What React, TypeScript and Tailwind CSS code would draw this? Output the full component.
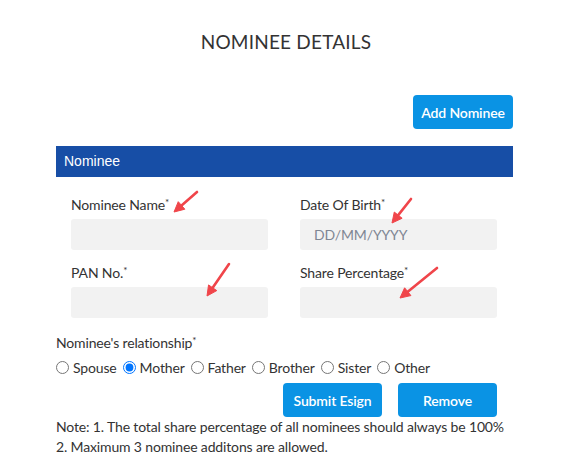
import React from "react";

const relations = ["Spouse", "Mother", "Father", "Brother", "Sister", "Other"];

function Star() {
  return <span className="relative -top-[4px] text-[10px] leading-none">*</span>;
}

function Field({ label, placeholder }: { label: string; placeholder?: string }) {
  return (
    <div className="flex flex-col">
      <label className="block h-5 text-[14px] leading-5 text-[#333]">
        {label}
        <Star />
      </label>
      <input
        className="mt-[4px] h-[31px] w-full rounded-[3px] bg-[#f2f2f2] px-[14px] text-[14px] text-[#333] outline-none placeholder:text-[#7f8694]"
        placeholder={placeholder}
      />
    </div>
  );
}

function Arrows() {
  const arrows = [
    [197, 192, 174, 212],
    [411, 199, 392, 223],
    [229, 264, 207, 296],
    [437, 268, 400, 298],
  ];
  return (
    <svg className="pointer-events-none absolute left-0 top-0" width="572" height="458">
      {arrows.map(([x1, y1, x2, y2], i) => {
        const a = Math.atan2(y2 - y1, x2 - x1);
        const l = 10;
        const w = 5;
        const bx = x2 - l * Math.cos(a);
        const by = y2 - l * Math.sin(a);
        const p1 = [bx + w * Math.sin(a), by - w * Math.cos(a)];
        const p2 = [bx - w * Math.sin(a), by + w * Math.cos(a)];
        return (
          <g key={i} fill="#f0454a" stroke="#f0454a">
            <line x1={x1} y1={y1} x2={bx} y2={by} strokeWidth="2.6" strokeLinecap="round" />
            <polygon points={`${p1[0]},${p1[1]} ${x2},${y2} ${p2[0]},${p2[1]}`} strokeWidth="1" strokeLinejoin="round" />
          </g>
        );
      })}
    </svg>
  );
}

export default function App() {
  return (
    <div className="relative h-[458px] w-[572px] overflow-hidden bg-white font-['Lato',sans-serif] tracking-[-0.15px] text-[#333]">
      <h1 className="pt-[30px] text-center text-[19px] leading-6 font-normal tracking-[0.2px] text-[#333]">
        NOMINEE DETAILS
      </h1>

      <div className="ml-[56px] w-[457px]">
        <div className="mt-[41px] flex justify-end">
          <button className="h-[34px] w-[100px] rounded-[4px] bg-[#0a93e4] text-[14px] font-semibold text-white">
            Add Nominee
          </button>
        </div>

        <div className="mt-[17px] flex h-[31px] items-center bg-[#174ea6] px-2 font-['Liberation_Sans',sans-serif] text-[14px] tracking-normal text-white">
          Nominee
        </div>

        <div className="grid grid-cols-2 gap-x-8 gap-y-[13px] pt-[18px] pr-4 pl-[15px]">
          <Field label="Nominee Name" />
          <Field label="Date Of Birth" placeholder="DD/MM/YYYY" />
          <Field label="PAN No." />
          <Field label="Share Percentage" />
        </div>

        <div className="mt-[15px] h-5 text-[14px] leading-5">
          Nominee's relationship
          <Star />
        </div>
        <div className="mt-[4px] flex h-5 items-center gap-[6px] text-[14px]">
          {relations.map((r) => (
            <label key={r} className="flex items-center gap-[4px]">
              <input
                type="radio"
                name="rel"
                defaultChecked={r === "Mother"}
                className="m-0 h-[13px] w-[13px]"
              />
              {r}
            </label>
          ))}
        </div>

        <div className="mt-[6px] flex justify-end gap-4 pr-4">
          <button className="h-[34px] w-[99px] rounded-[4px] bg-[#0a93e4] text-[14px] font-semibold text-white">
            Submit Esign
          </button>
          <button className="h-[34px] w-[99px] rounded-[4px] bg-[#0a93e4] text-[14px] font-semibold text-white">
            Remove
          </button>
        </div>

        <p className="mt-0 text-[14px] leading-5 whitespace-nowrap">
          Note: 1. The total share percentage of all nominees should always be 100%
        </p>
        <p className="text-[14px] leading-5">2. Maximum 3 nominee additons are allowed.</p>
      </div>

      <Arrows />
    </div>
  );
}
